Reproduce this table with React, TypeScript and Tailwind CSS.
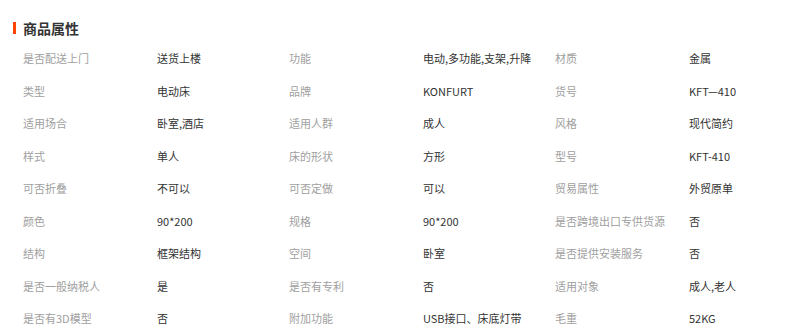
import React from 'react';

const rows: string[][] = [
  ['是否配送上门', '送货上楼', '功能', '电动,多功能,支架,升降', '材质', '金属'],
  ['类型', '电动床', '品牌', 'KONFURT', '货号', 'KFT—410'],
  ['适用场合', '卧室,酒店', '适用人群', '成人', '风格', '现代简约'],
  ['样式', '单人', '床的形状', '方形', '型号', 'KFT-410'],
  ['可否折叠', '不可以', '可否定做', '可以', '贸易属性', '外贸原单'],
  ['颜色', '90*200', '规格', '90*200', '是否跨境出口专供货源', '否'],
  ['结构', '框架结构', '空间', '卧室', '是否提供安装服务', '否'],
  ['是否一般纳税人', '是', '是否有专利', '否', '适用对象', '成人,老人'],
  ['是否有3D模型', '否', '附加功能', 'USB接口、床底灯带', '毛重', '52KG'],
];

export default function App() {
  return (
    <div
      className="w-[791px] h-[335px] overflow-hidden bg-white"
      style={{ fontFamily: '"Noto Sans CJK SC", "Noto Sans", sans-serif' }}
    >
      <div className="flex items-center pl-[13px] pt-[14px] h-[42px]">
        <div className="w-[3px] h-[12px] bg-[#ff4400] mr-[7px]" />
        <h2 className="text-[14px] font-bold text-[#333] leading-[14px]">商品属性</h2>
      </div>
      <div className="pl-[23px]">
        {rows.map((r, i) => (
          <div key={i} className="flex items-center h-[32.5px] text-[11px] leading-[12px] whitespace-nowrap">
            {r.map((cell, j) => (
              <div
                key={j}
                className={
                  j % 2 === 0
                    ? 'w-[134px] shrink-0 text-[#a0a0a0]'
                    : 'w-[132px] shrink-0 text-[#333]'
                }
              >
                {cell}
              </div>
            ))}
          </div>
        ))}
      </div>
    </div>
  );
}
